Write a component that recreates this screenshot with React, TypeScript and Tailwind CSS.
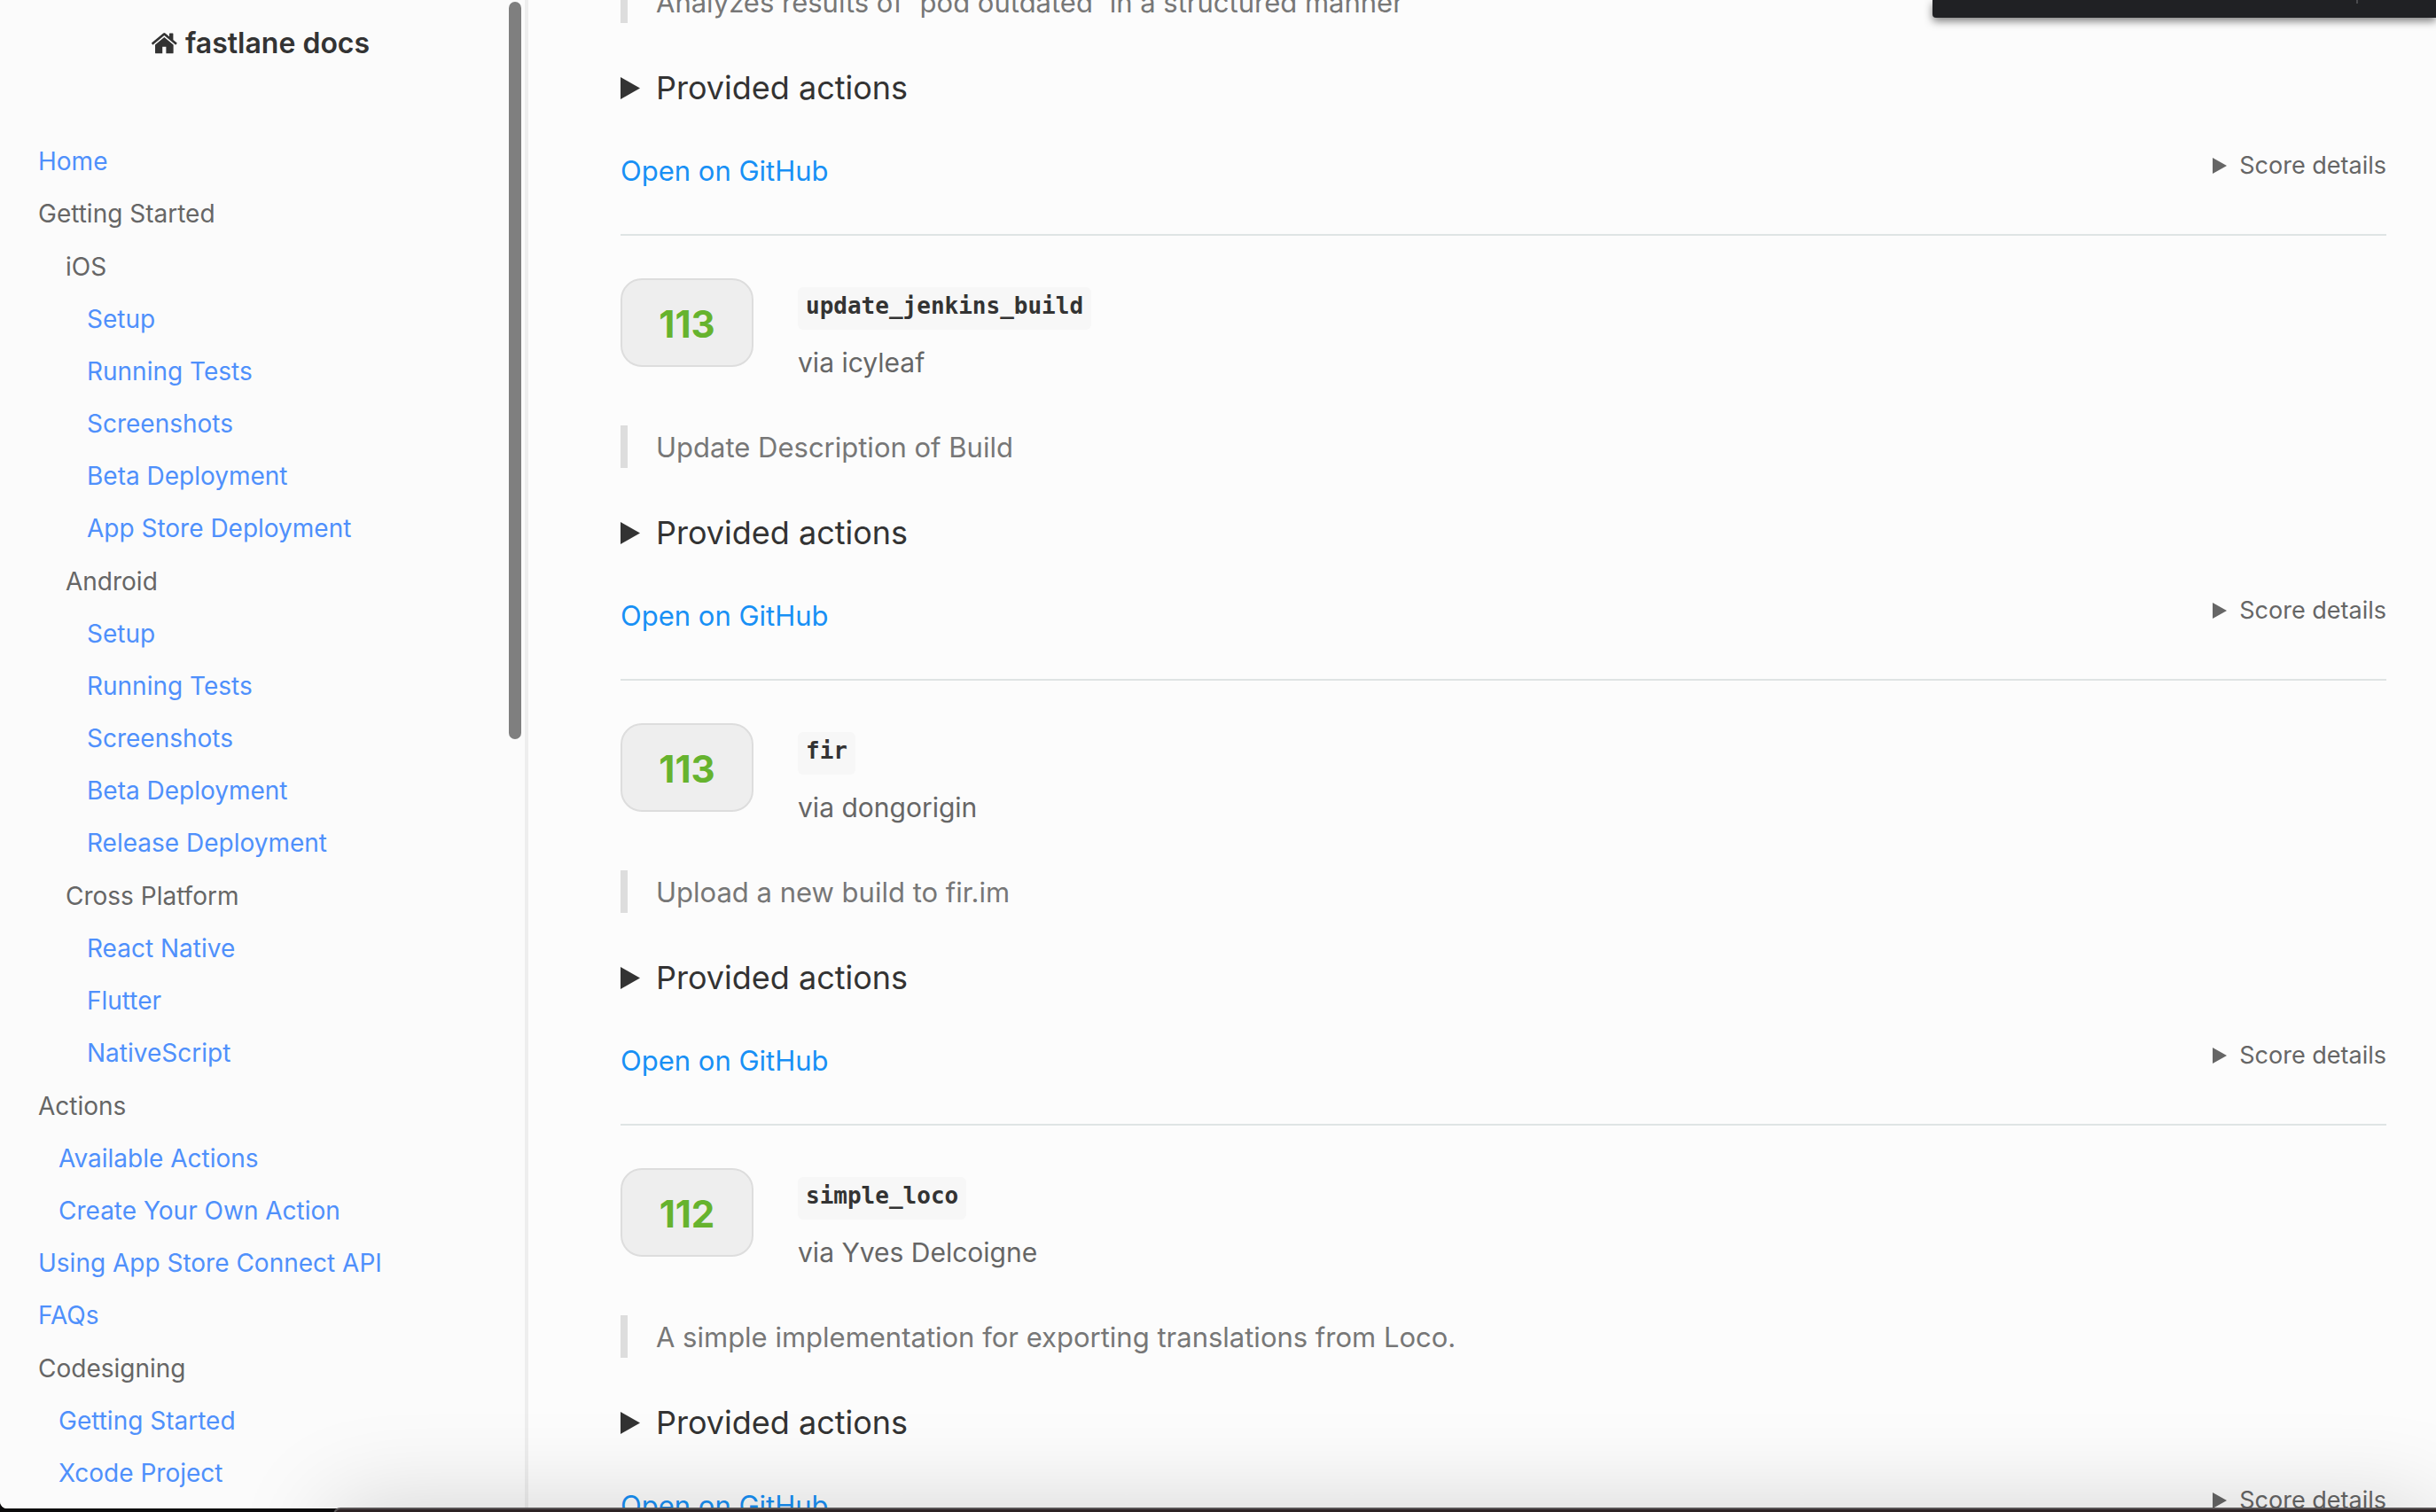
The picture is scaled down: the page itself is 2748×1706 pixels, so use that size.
import React from 'react';

type Level = 'top' | 'action' | 'platform' | 'page';
type NavItem = { label: string; level: Level; heading?: boolean };

const NAV_GROUPS: NavItem[][] = [
  [
    { label: 'Home', level: 'top' },
    { label: 'Getting Started', level: 'top', heading: true },
  ],
  [
    { label: 'iOS', level: 'platform', heading: true },
    { label: 'Setup', level: 'page' },
    { label: 'Running Tests', level: 'page' },
    { label: 'Screenshots', level: 'page' },
    { label: 'Beta Deployment', level: 'page' },
    { label: 'App Store Deployment', level: 'page' },
  ],
  [
    { label: 'Android', level: 'platform', heading: true },
    { label: 'Setup', level: 'page' },
    { label: 'Running Tests', level: 'page' },
    { label: 'Screenshots', level: 'page' },
    { label: 'Beta Deployment', level: 'page' },
    { label: 'Release Deployment', level: 'page' },
  ],
  [
    { label: 'Cross Platform', level: 'platform', heading: true },
    { label: 'React Native', level: 'page' },
    { label: 'Flutter', level: 'page' },
    { label: 'NativeScript', level: 'page' },
  ],
  [
    { label: 'Actions', level: 'top', heading: true },
    { label: 'Available Actions', level: 'action' },
    { label: 'Create Your Own Action', level: 'action' },
    { label: 'Using App Store Connect API', level: 'top' },
    { label: 'FAQs', level: 'top' },
  ],
  [
    { label: 'Codesigning', level: 'top', heading: true },
    { label: 'Getting Started', level: 'action' },
    { label: 'Xcode Project', level: 'action' },
  ],
];

const INDENT: Record<Level, string> = {
  top: 'pl-[43px]',
  action: 'pl-[66px]',
  platform: 'pl-[74px]',
  page: 'pl-[98px]',
};

type Plugin = { name: string; score: number; author: string; description: string };

const PLUGINS: Plugin[] = [
  { name: 'update_jenkins_build', score: 113, author: 'icyleaf', description: 'Update Description of Build' },
  { name: 'fir', score: 113, author: 'dongorigin', description: 'Upload a new build to fir.im' },
  {
    name: 'simple_loco',
    score: 112,
    author: 'Yves Delcoigne',
    description: 'A simple implementation for exporting translations from Loco.',
  },
];

function HomeIcon() {
  return (
    <svg viewBox="0 0 29 24" className="h-6 w-[29px]" fill="currentColor" aria-hidden="true">
      <path d="M13.2.4q1.1-.8 2.2 0L20 4.2V1q0-.6.6-.6h3.2q.6 0 .6.6v6.9l4 3.3q.5.4.1.9l-.9 1.1q-.4.5-.9.1L14.3 3.1 1.9 13.3q-.5.4-.9-.1L.1 12.1q-.4-.5.1-.9z" />
      <path d="M14.3 4.9 24.6 13.4v9q0 .9-.9.9h-7.3v-7.5h-4.2v7.5H4.9q-.9 0-.9-.9v-9z" />
    </svg>
  );
}

function Sidebar() {
  return (
    <aside className="relative w-[596px] shrink-0 overflow-hidden border-r-4 border-[#eeeeee] bg-[#fbfbfb]">
      <a
        href="#home"
        className="flex h-[98px] items-center justify-center gap-[9px] pr-1 text-[32px] font-semibold text-[#333333]"
      >
        <HomeIcon />
        fastlane docs
      </a>
      <nav className="flex flex-col gap-px pt-[55px] text-[28px] leading-[59px]">
        {NAV_GROUPS.map((group, g) => (
          <ul key={g}>
            {group.map((item) => (
              <li key={item.label} className={INDENT[item.level]}>
                {item.heading ? (
                  <span className="text-[#666666]">{item.label}</span>
                ) : (
                  <a href="#page" className="text-[#4f90fb]">
                    {item.label}
                  </a>
                )}
              </li>
            ))}
          </ul>
        ))}
      </nav>
      <div className="absolute top-[2px] right-1 h-[832px] w-[14px] rounded-full bg-[#7f7f7f]" />
    </aside>
  );
}

function PluginBody({ description }: { description: string }) {
  return (
    <>
      <blockquote className="h-12 border-l-8 border-[#dddddd] pl-8 text-[31px] leading-[50px] text-[#777777]">
        {description}
      </blockquote>
      <details className="mt-[49px] text-[36px] leading-[48px] text-[#333333]">
        <summary className="flex list-none items-center gap-[18px]">
          <svg viewBox="0 0 22 25" className="h-[25px] w-[22px]" fill="currentColor" aria-hidden="true">
            <path d="M0 0 22 12.5 0 25z" />
          </svg>
          Provided actions
        </summary>
      </details>
      <div className="mt-[39px] flex items-start justify-between">
        <a href="#github" className="mt-[7px] text-[31px] leading-[48px] text-[#1890f5]">
          Open on GitHub
        </a>
        <details className="text-[27px] leading-[50px] text-[#666666]">
          <summary className="flex list-none items-center gap-[14px]">
            <svg viewBox="0 0 16 18" className="h-[18px] w-4" fill="currentColor" aria-hidden="true">
              <path d="M0 0 16 9 0 18z" />
            </svg>
            Score details
          </summary>
        </details>
      </div>
      <hr className="mt-[47px] border-t-2 border-[#dfe4e4]" />
    </>
  );
}

function PluginCard({ plugin }: { plugin: Plugin }) {
  return (
    <article className="pt-12">
      <header className="mb-[47px] flex items-start gap-[50px]">
        <div className="flex h-[100px] w-[150px] items-center justify-center rounded-3xl border-2 border-[#dddddd] bg-[#eeeeee] pt-[3px] text-[42px] font-bold text-[#66b32e]">
          {plugin.score}
        </div>
        <div className="flex flex-col items-start gap-[13px] pt-[10px]">
          <code className="h-12 rounded-md bg-[#f7f7f7] px-[9px] font-['DejaVu_Sans_Mono',monospace] text-[26px] leading-[42px] font-bold text-[#333333]">
            {plugin.name}
          </code>
          <p className="text-[30px] leading-[48px] text-[#666666]">via {plugin.author}</p>
        </div>
      </header>
      <PluginBody description={plugin.description} />
    </article>
  );
}

export default function App() {
  return (
    <div className="relative flex h-screen flex-col overflow-hidden bg-[#0b0a0b] pb-1 font-['Inter','Liberation_Sans',sans-serif]">
      <div className="flex min-h-0 flex-1 overflow-hidden rounded-bl-lg bg-[#fcfcfc]">
        <Sidebar />
        <main className="min-w-0 flex-1 overflow-hidden pr-14 pl-[104px]">
          <article className="-mt-[22px]">
            <PluginBody description="Analyzes results of `pod outdated` in a structured manner" />
          </article>
          {PLUGINS.map((plugin) => (
            <PluginCard key={plugin.name} plugin={plugin} />
          ))}
        </main>
      </div>

      {/* Edges of the neighbouring windows that overlap the page */}
      <div className="absolute top-0 right-0 flex h-5 w-[568px] justify-end rounded-bl bg-[#202124] pr-[88px] shadow-[0_4px_10px_rgba(0,0,0,0.5)]">
        <div className="h-1 w-0.5 bg-[#4a4b4e]" />
      </div>
      <div className="absolute top-full right-0 left-[376px] -mt-[5px] h-40 rounded-tl-lg border-t-2 border-l-2 border-[#575354] bg-[#2c2224] shadow-[0_0_110px_rgba(0,0,0,0.17)]" />
    </div>
  );
}
